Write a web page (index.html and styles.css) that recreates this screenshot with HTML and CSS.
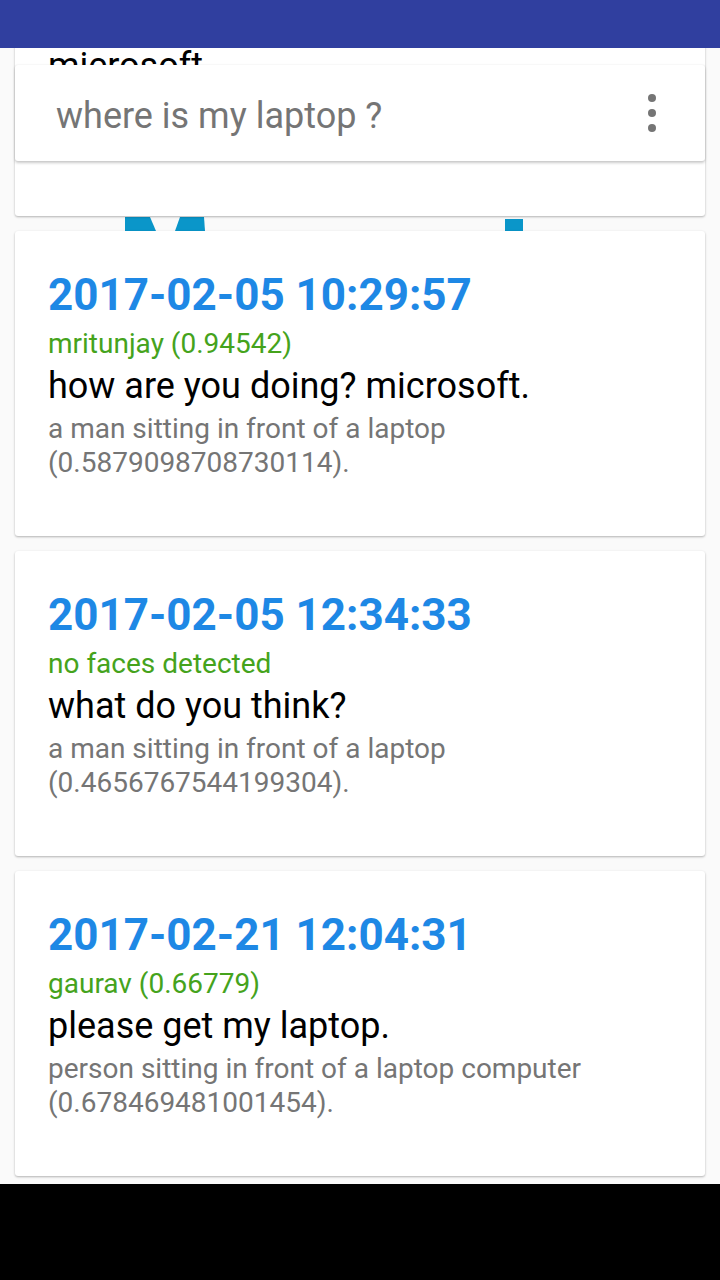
FILE: index.html
```html
<!DOCTYPE html>
<html>
<head>
<meta charset="utf-8">
<link rel="stylesheet" href="styles.css">
</head>
<body>
<div class="screen">
  <header class="appbar"></header>
  <main class="content">
    <div class="feed">
      <svg class="peek" width="720" height="15" viewBox="0 0 720 15">
        <polygon points="125,1 150,1 156,15 125,15" fill="#0a96c9"/>
        <polygon points="180,1 204,1 205,15 175,15" fill="#0a96c9"/>
        <rect x="505" y="3" width="18" height="12" fill="#0a96c9"/>
      </svg>
      <article class="card">
        <div class="date">2017-02-05 10:21:14</div>
        <div class="who">no faces detected</div>
        <div class="msg">microsoft</div>
        <div class="desc">a man sitting in front of a laptop<br>(0.5879098708730114).</div>
      </article>
      <article class="card">
        <div class="date">2017-02-05 10:29:57</div>
        <div class="who">mritunjay (0.94542)</div>
        <div class="msg">how are you doing? microsoft.</div>
        <div class="desc">a man sitting in front of a laptop<br>(0.5879098708730114).</div>
      </article>
      <article class="card">
        <div class="date">2017-02-05 12:34:33</div>
        <div class="who">no faces detected</div>
        <div class="msg">what do you think?</div>
        <div class="desc">a man sitting in front of a laptop<br>(0.4656767544199304).</div>
      </article>
      <article class="card">
        <div class="date">2017-02-21 12:04:31</div>
        <div class="who">gaurav (0.66779)</div>
        <div class="msg">please get my laptop.</div>
        <div class="desc">person sitting in front of a laptop computer<br>(0.678469481001454).</div>
      </article>
    </div>
    <div class="search">
      <span class="query">where is my laptop ?</span>
      <svg class="more" width="8" height="38" viewBox="0 0 8 38">
        <circle cx="4" cy="4" r="4" fill="#757575"/>
        <circle cx="4" cy="19" r="4" fill="#757575"/>
        <circle cx="4" cy="34" r="4" fill="#757575"/>
      </svg>
    </div>
  </main>
  <footer class="navbar"></footer>
</div>
</body>
</html>
```
FILE: styles.css
```css
* { box-sizing: border-box; }
html, body { margin: 0; padding: 0; }
body {
  width: 720px;
  height: 1280px;
  overflow: hidden;
  background: #fafafa;
  font-family: Roboto, "Noto Sans", sans-serif;
}
.screen {
  display: flex;
  flex-direction: column;
  height: 1280px;
}
.appbar {
  height: 48px;
  flex: none;
  background: #303f9f;
  position: relative;
  z-index: 3;
}
.content {
  flex: 1;
  position: relative;
  overflow: hidden;
}
.feed {
  position: relative;
  display: flex;
  flex-direction: column;
  gap: 15px;
  padding: 0 15px;
  margin-top: -137px;
}
.peek {
  position: absolute;
  left: 0;
  top: 305px;
  z-index: 0;
}
.card {
  position: relative;
  z-index: 1;
  height: 305px;
  background: #fff;
  border-radius: 3px;
  box-shadow: 0 1px 2px rgba(0,0,0,0.18), 0 1px 3px rgba(0,0,0,0.12);
  padding: 38px 33px 0;
}
.date {
  font-size: 44px;
  line-height: 52px;
  font-weight: 700;
  color: #1e88e5;
}
.who {
  margin-top: 6px;
  font-size: 28px;
  line-height: 34px;
  color: #45a31c;
}
.msg {
  margin-top: 5px;
  font-size: 36px;
  line-height: 40px;
  color: #000;
}
.desc {
  margin-top: 6px;
  font-size: 28px;
  line-height: 34px;
  color: #757575;
}
.search {
  position: absolute;
  top: 17px;
  left: 15px;
  right: 15px;
  height: 96px;
  background: #fff;
  border-radius: 3px;
  box-shadow: 0 2px 3px rgba(0,0,0,0.2), 0 0 2px rgba(0,0,0,0.1);
  display: flex;
  align-items: center;
  justify-content: space-between;
  padding: 0 49px 0 41px;
  z-index: 2;
}
.query {
  font-size: 36px;
  line-height: 42px;
  color: #757575;
  padding-top: 6px;
}
.more { display: block; }
.navbar {
  height: 96px;
  flex: none;
  background: #000;
}
```
